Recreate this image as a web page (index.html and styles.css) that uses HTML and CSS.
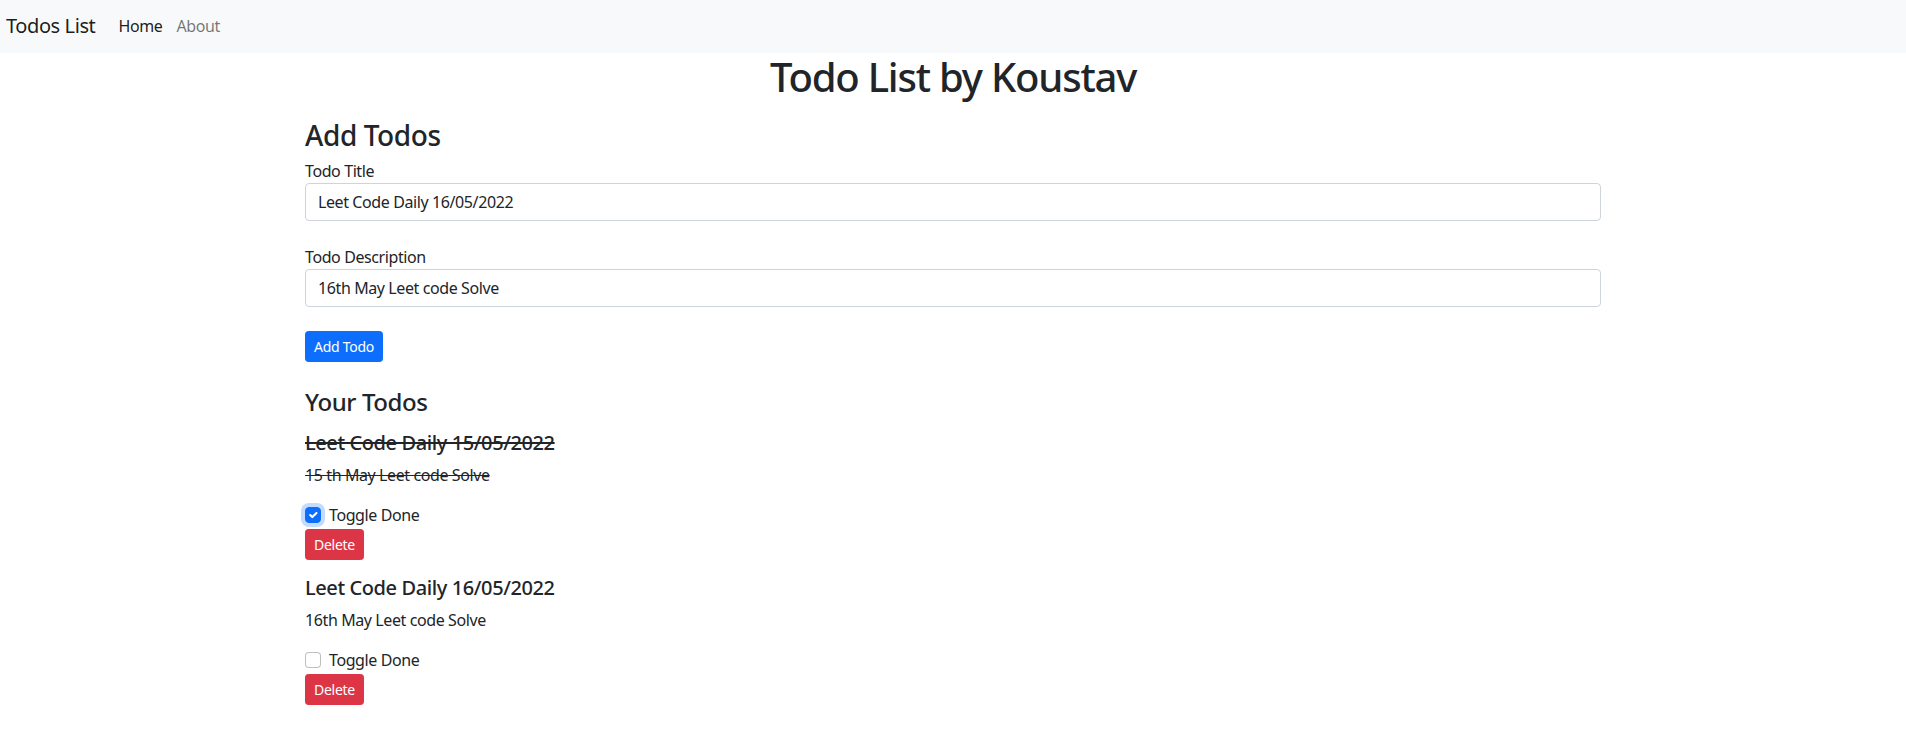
FILE: index.html
```html
<!DOCTYPE html>
<html lang="en">
<head>
<meta charset="utf-8">
<title>Todos List</title>
<link rel="stylesheet" href="styles.css">
</head>
<body>
<nav class="navbar">
  <a class="brand" href="#">Todos List</a>
  <ul class="nav-links">
    <li><a class="nav-link active" href="#">Home</a></li>
    <li><a class="nav-link" href="#">About</a></li>
  </ul>
</nav>

<h1 class="page-title">Todo List by Koustav</h1>

<section class="container add-section">
  <h3 class="h3">Add Todos</h3>
  <form class="todo-form">
    <div class="field">
      <label class="field-label" for="title">Todo Title</label>
      <input class="form-control" id="title" type="text" value="Leet Code Daily 16/05/2022">
    </div>
    <div class="field">
      <label class="field-label" for="desc">Todo Description</label>
      <input class="form-control" id="desc" type="text" value="16th May Leet code Solve">
    </div>
    <button class="btn btn-primary" type="button">Add Todo</button>
  </form>
</section>

<section class="container list-section">
  <h4 class="h4">Your Todos</h4>
  <div class="todo done">
    <h5 class="todo-title">Leet Code Daily 15/05/2022</h5>
    <p class="todo-desc">15 th May Leet code Solve</p>
    <div class="form-check">
      <span class="check checked focus"><svg viewBox="0 0 20 20" width="16" height="16"><path d="M6 10l3 3l6-6" fill="none" stroke="#fff" stroke-width="3" stroke-linecap="round" stroke-linejoin="round"/></svg></span>
      <span class="check-label">Toggle Done</span>
    </div>
    <button class="btn btn-danger" type="button">Delete</button>
  </div>
  <div class="todo">
    <h5 class="todo-title">Leet Code Daily 16/05/2022</h5>
    <p class="todo-desc">16th May Leet code Solve</p>
    <div class="form-check">
      <span class="check"></span>
      <span class="check-label">Toggle Done</span>
    </div>
    <button class="btn btn-danger" type="button">Delete</button>
  </div>
</section>
</body>
</html>
```
FILE: styles.css
```css
*{box-sizing:border-box}
body{
  margin:0;
  font-family:"Noto Sans","Liberation Sans",sans-serif;
  font-size:16px;
  line-height:1.5;
  color:#212529;
  background:#fff;
  letter-spacing:-0.025em;
}
a{text-decoration:none}
.navbar{
  height:53px;
  background:#f8f9fa;
  display:flex;
  align-items:center;
  padding:0 6px 2px;
}
.brand{
  font-size:20px;
  line-height:30px;
  color:rgba(0,0,0,.9);
  margin-right:16px;
}
.nav-links{
  list-style:none;
  margin:0;
  padding:0;
  display:flex;
}
.nav-link{
  display:block;
  padding:8px 7px;
  line-height:24px;
  color:rgba(0,0,0,.55);
}
.nav-link.active{color:rgba(0,0,0,.9)}

.page-title{
  margin:0;
  text-align:center;
  font-size:40px;
  font-weight:500;
  line-height:48px;
  letter-spacing:-0.03em;
}
.container{
  max-width:1320px;
  margin:0 auto;
  padding:0 12px;
}
.add-section{padding-top:18px}
.h3{
  margin:0 0 6px;
  font-size:28px;
  font-weight:500;
  line-height:1.2;
}
.field{margin-bottom:16px;}
.field + .field{margin-top:24px}
.field:last-of-type{margin-bottom:24px}
.field-label{display:block;line-height:24px}
.form-control{
  display:block;
  width:100%;
  height:38px;
  padding:6px 12px;
  font:inherit;
  letter-spacing:inherit;
  color:#212529;
  background:#fff;
  border:1px solid #ced4da;
  border-radius:4px;
  outline:none;
}
.btn{
  display:inline-block;
  font:inherit;
  font-size:14px;
  line-height:21px;
  letter-spacing:-0.02em;
  padding:4px 8px;
  border:1px solid transparent;
  border-radius:3.2px;
  color:#fff;
  cursor:pointer;
}
.btn-primary{background:#0d6efd;border-color:#0d6efd}
.btn-danger{background:#dc3545;border-color:#dc3545}

.list-section{padding-top:26px}
.h4{
  margin:0 0 15px;
  font-size:24px;
  font-weight:500;
  line-height:1.2;
}
.todo + .todo{margin-top:16px}
.todo-title{
  margin:0 0 8px;
  font-size:20px;
  font-weight:500;
  line-height:1.2;
}
.todo-desc{margin:0 0 16px}
.done .todo-title,.done .todo-desc{text-decoration:line-through}
.form-check{
  display:flex;
  align-items:flex-start;
  min-height:24px;
  margin-bottom:2px;
}
.check{
  width:16px;
  height:16px;
  margin-top:4px;
  margin-right:8px;
  border:1px solid rgba(0,0,0,.25);
  border-radius:4px;
  background:#fff;
  display:flex;
  align-items:center;
  justify-content:center;
  flex-shrink:0;
}
.check svg{display:block}
.check.checked{background:#0d6efd;border-color:#0d6efd}
.check.focus{box-shadow:0 0 0 4px rgba(13,110,253,.25)}
.check-label{line-height:24px}
```
